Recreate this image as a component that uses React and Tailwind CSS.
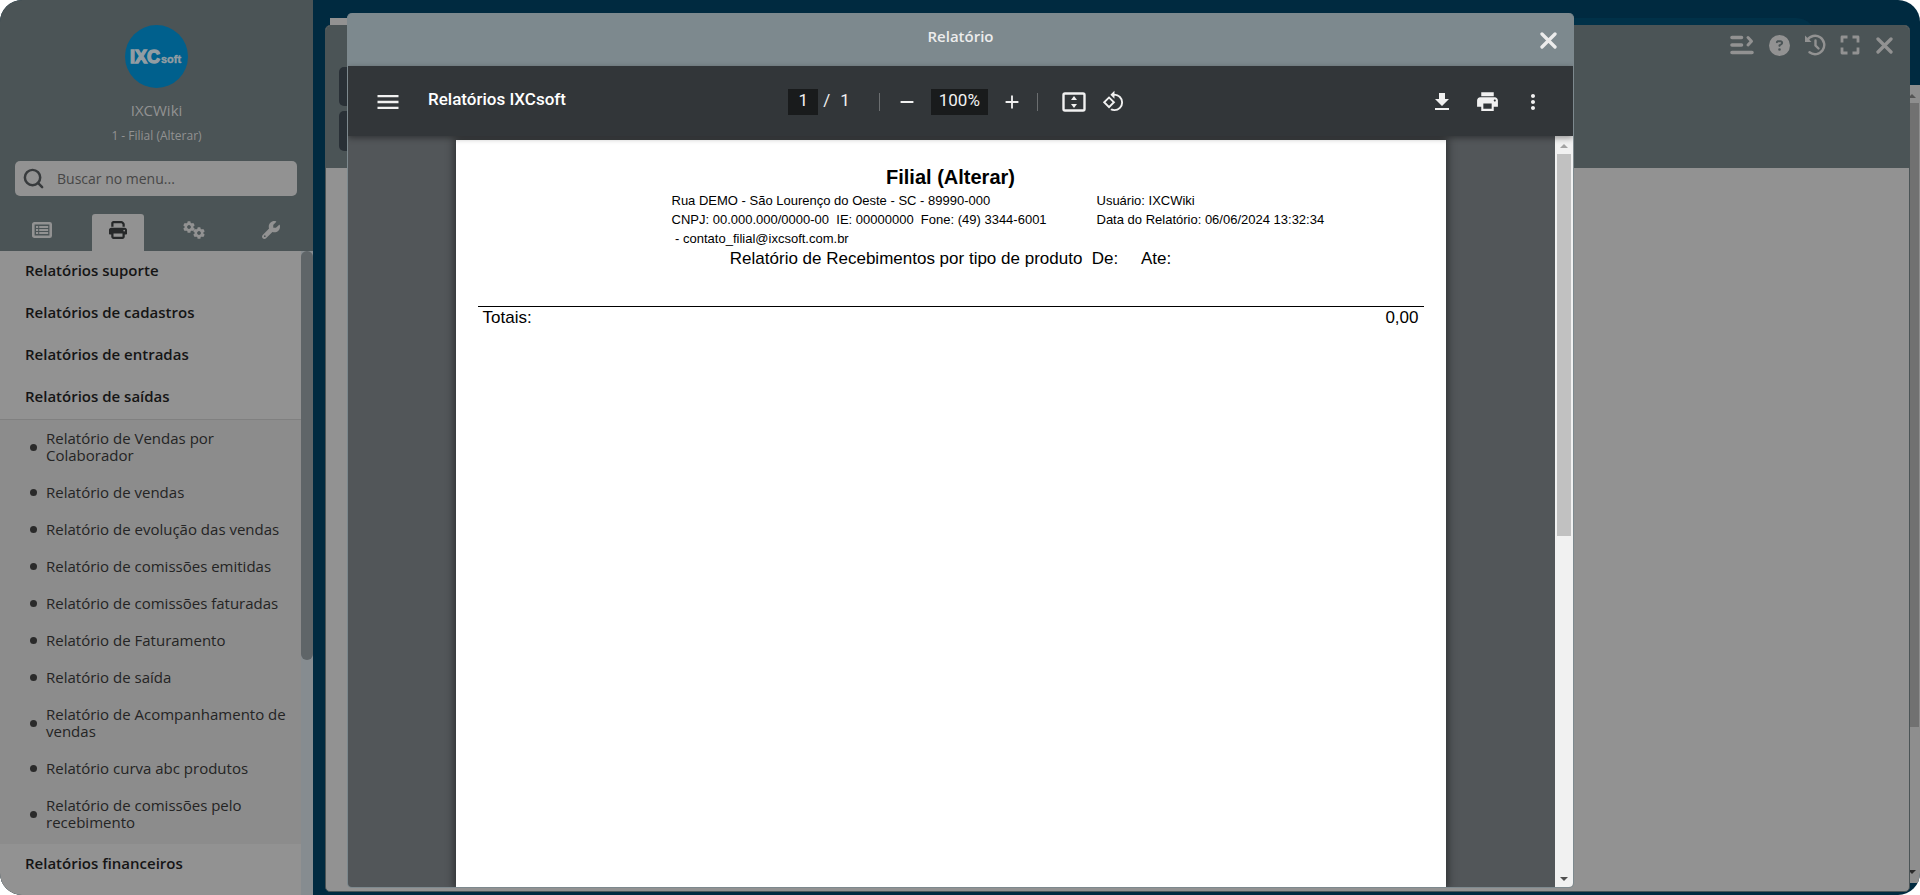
import React from 'react';
import { FaPrint, FaWrench, FaCircleQuestion } from 'react-icons/fa6';
import {
    MdMenu,
    MdAdd,
    MdRemove,
    MdFileDownload,
    MdPrint,
    MdMoreVert,
    MdRotate90DegreesCcw,
} from 'react-icons/md';
import { Search } from 'lucide-react';

const sections = [
    { label: 'Relatórios suporte' },
    { label: 'Relatórios de cadastros' },
    { label: 'Relatórios de entradas' },
    {
        label: 'Relatórios de saídas',
        items: [
            'Relatório de Vendas por Colaborador',
            'Relatório de vendas',
            'Relatório de evolução das vendas',
            'Relatório de comissões emitidas',
            'Relatório de comissões faturadas',
            'Relatório de Faturamento',
            'Relatório de saída',
            'Relatório de Acompanhamento de vendas',
            'Relatório curva abc produtos',
            'Relatório de comissões pelo recebimento',
        ],
    },
    { label: 'Relatórios financeiros' },
];

function ListIcon() {
    return (
        <svg width="20" height="16" viewBox="0 0 20 16" fill="none" stroke="currentColor">
            <rect x="1.3" y="1.3" width="17.4" height="13.4" rx="1" strokeWidth="2.6" />
            <path d="M4 5h2.200M4 8h2.200M4 11h2.200M7.200 5h9M7.200 8h9M7.200 11h9" strokeWidth="1.800" />
        </svg>
    );
}

function Gear({ cx, cy }) {
    return (
        <g transform={`translate(${cx} ${cy})`}>
            <circle r="3.2" fill="none" stroke="currentColor" strokeWidth="2.6" />
            {[0, 60, 120, 180, 240, 300].map(angle => (
                <rect key={angle} x="-1.5" y="-5.8" width="3" height="2.5" rx="0.5" fill="currentColor" transform={`rotate(${angle})`} />
            ))}
        </g>
    );
}

function GearsIcon() {
    return (
        <svg width="22" height="18" viewBox="0 0 22 18">
            <Gear cx={6} cy={6} />
            <Gear cx={16} cy={12} />
        </svg>
    );
}

function CloseIcon() {
    return (
        <svg width="17" height="17" viewBox="0 0 17 17" fill="none" stroke="currentColor" strokeWidth="3.3" strokeLinecap="round">
            <path d="M2 2l13 13M15 2l-13 13" />
        </svg>
    );
}

function ShortcutsIcon() {
    return (
        <svg width="24" height="20" viewBox="0 0 24 20" fill="none" stroke="currentColor" strokeWidth="3.6" strokeLinecap="round" strokeLinejoin="round">
            <path d="M2 2.500h9.500M2 10h9.500M2 17.500h20" />
            <path d="M18 2.500l3.500 3.700L18 10" strokeWidth="3" />
        </svg>
    );
}

function HistoryIcon() {
    return (
        <svg width="22" height="22" viewBox="0 0 22 22" fill="none" stroke="currentColor" strokeWidth="2.4" strokeLinecap="round">
            <path d="M3.200 6.200A9.200 9.200 0 1 1 5.500 18.300" />
            <path d="M11.500 6.500v5l3 3" />
            <path d="M1 1.500v6.500h6.500z" fill="currentColor" stroke="none" />
        </svg>
    );
}

function FullscreenIcon() {
    return (
        <svg width="20" height="20" viewBox="0 0 20 20" fill="none" stroke="currentColor" strokeWidth="2.8" strokeLinejoin="round">
            <path d="M2 7.500V2h5.500M12.500 2h5.500v5.500M18 12.500v5.500h-5.500M7.500 18H2v-5.500" />
        </svg>
    );
}

function FitPageIcon() {
    return (
        <svg width="24" height="20" viewBox="0 0 24 20" fill="none">
            <rect x="1.5" y="1.5" width="21" height="17" rx="1.5" stroke="currentColor" strokeWidth="2.4" />
            <path d="M12 4l3 4H9zM12 16l3-4H9z" fill="currentColor" />
        </svg>
    );
}

function Logo() {
    return (
        <svg width="63" height="63" viewBox="0 0 63 63" role="img" aria-label="IXCsoft">
            <circle cx="31.5" cy="31.5" r="31.5" fill="#00608d" />
            <g fill="#929da3" stroke="#929da3" fontFamily="Liberation Sans, sans-serif" fontWeight="700">
                <text x="5" y="38" strokeWidth="1.4" fontSize="18">IXC</text>
                <text x="36" y="38" strokeWidth="0.4" fontSize="11">soft</text>
            </g>
        </svg>
    );
}

function Arrow({ down, className }) {
    return (
        <svg className={className} width="8" height="4" viewBox="0 0 8 4" fill="currentColor">
            <path d={down ? 'M0 0h8L4 4z' : 'M0 4h8L4 0z'} />
        </svg>
    );
}

function Sidebar() {
    return (
        <aside className="flex w-[313px] shrink-0 flex-col bg-[#4b5456]">
            <div className="flex flex-col items-center pt-[25px] text-[#929292]">
                <Logo />
                <p className="mt-[11px] text-[15px] leading-[22px]">IXCWiki</p>
                <p className="mt-1 text-[12px] leading-[22px]">1 - Filial (Alterar)</p>
            </div>

            <div className="ml-[15px] mr-4 mt-[14px] flex h-[35px] shrink-0 items-center rounded-[5px] bg-[#929292] pl-[7px] text-[#383b3d]">
                <Search className="shrink-0" size={23} strokeWidth={2.6} />
                <input
                    type="text"
                    aria-label="Buscar no menu"
                    placeholder="Buscar no menu..."
                    className="ml-3 h-full min-w-0 flex-1 bg-transparent text-[14px] outline-none placeholder:text-[#464646]"
                />
            </div>

            <nav className="mt-[18px] flex h-[37px] shrink-0 text-[#929292]">
                <button className="mr-2 flex w-[84px] items-center justify-center pb-1.5" aria-label="Menu">
                    <ListIcon />
                </button>
                <button className="flex w-[52px] items-center justify-center rounded-t-[3px] bg-[#929292] pb-1.5 text-[#262829]" aria-label="Relatórios">
                    <FaPrint size={18} />
                </button>
                <button className="ml-3 flex w-[76px] items-center justify-center pb-1.5" aria-label="Configurações">
                    <GearsIcon />
                </button>
                <button className="flex w-[78px] items-center justify-center pb-1.5" aria-label="Ferramentas">
                    <FaWrench size={18} />
                </button>
            </nav>

            <div className="flex min-h-0 flex-1 bg-[#929292]">
                <div className="flex-1 overflow-hidden">
                    {sections.map(section => (
                        <div key={section.label}>
                            <button className="flex h-[42px] w-full items-center pb-[3px] pl-[25px] text-[15px] font-semibold text-[#151515]">
                                {section.label}
                            </button>
                            {section.items && (
                                <ul className="border-t border-[#808080] bg-[#8c8c8c] pb-[3px]">
                                    {section.items.map(item => (
                                        <li key={item}>
                                            <a href="#" className="flex items-center py-[10px] pl-[30px] pr-2 text-[15px] leading-[17px] text-[#242424]">
                                                <span className="mr-[9px] h-[7px] w-[7px] shrink-0 rounded-full bg-[#2a2a2a]" />
                                                {item}
                                            </a>
                                        </li>
                                    ))}
                                </ul>
                            )}
                        </div>
                    ))}
                </div>
                <div className="w-3 bg-[#868c90]">
                    <div className="h-[409px] rounded-full bg-[#5f6568]" />
                </div>
            </div>
        </aside>
    );
}

function Desktop() {
    return (
        <main className="relative flex min-w-0 flex-1 flex-col">
            <div className="flex h-[85px] shrink-0 pl-[17px] pr-[104px] pt-[18px]">
                <div className="w-[120px] bg-[#929292]" />
                <div className="flex-1 rounded-tr-[20px] bg-[#003148]" />
            </div>
            <div className="mb-3 flex flex-1 justify-end">
                <div className="flex w-[17px] flex-col items-center bg-[#8e8e8e] py-[7px]">
                    <Arrow className="my-[2px] shrink-0 text-[#555555]" />
                    <div className="mt-[3px] h-[624px] w-[15px] bg-[#717171]" />
                    <Arrow down className="mb-[2px] mt-auto shrink-0 text-[#2c2c2c]" />
                </div>
            </div>

            <section className="absolute bottom-[3px] left-3 right-[10px] top-[25px] flex flex-col overflow-hidden rounded-[5px] border border-[#4b5456] bg-[#929292]">
                <div className="flex h-[142px] shrink-0 justify-between bg-[#4b5456] pl-[13px] pr-4">
                    <div className="flex flex-col gap-[5px] pt-[41px]">
                        <div className="h-[39px] w-[120px] rounded-[5px] bg-[#293036]" />
                        <div className="h-10 w-[120px] rounded-[5px] bg-[#293036]" />
                    </div>
                    <div className="flex h-[38px] items-center text-[#929292]">
                        <button className="mr-[15px]" aria-label="Atalhos"><ShortcutsIcon /></button>
                        <button className="mr-[14px]" aria-label="Ajuda"><FaCircleQuestion size={21} /></button>
                        <button className="mr-[14px]" aria-label="Histórico"><HistoryIcon /></button>
                        <button className="mr-4" aria-label="Tela cheia"><FullscreenIcon /></button>
                        <button aria-label="Fechar janela"><CloseIcon /></button>
                    </div>
                </div>
            </section>
        </main>
    );
}

function PdfToolbar() {
    return (
        <div className="z-10 grid h-[70px] shrink-0 grid-cols-[1fr_auto_1fr] items-center bg-[#323639] pt-px text-[#f1f1f1] shadow-[0_2px_6px_rgba(0,0,0,0.4)]">
            <div className="flex items-center pl-[26px]">
                <button aria-label="Menu do documento"><MdMenu size={28} /></button>
                <h2 className="ml-[26px] pb-1 font-[Roboto] text-[17px] font-medium text-white">Relatórios IXCsoft</h2>
            </div>

            <div className="flex items-center pr-2 font-[Roboto] text-[17px]">
                <input
                    type="text"
                    aria-label="Página"
                    defaultValue="1"
                    className="h-[26px] w-[30px] bg-[#191b1c] pb-1 text-center outline-none"
                />
                <span className="ml-[5px] flex gap-[10px] pb-0.5">
                    <span>/</span>
                    <span>1</span>
                </span>
                <span className="ml-[29px] h-[18px] w-px bg-[#6b6e70]" />
                <button className="ml-4" aria-label="Diminuir zoom"><MdRemove size={22} /></button>
                <input
                    type="text"
                    aria-label="Zoom"
                    defaultValue="100%"
                    className="ml-[13px] h-[26px] w-[57px] bg-[#191b1c] pb-1 text-center outline-none"
                />
                <button className="ml-[13px]" aria-label="Aumentar zoom"><MdAdd size={22} /></button>
                <span className="ml-[14px] h-[18px] w-px bg-[#6b6e70]" />
                <button className="ml-6" aria-label="Ajustar à página"><FitPageIcon /></button>
                <button className="ml-4" aria-label="Girar"><MdRotate90DegreesCcw size={23} /></button>
            </div>

            <div className="flex items-center justify-end gap-[21px] pr-7">
                <button aria-label="Baixar"><MdFileDownload size={24} /></button>
                <button aria-label="Imprimir"><MdPrint size={25} /></button>
                <button aria-label="Mais ações"><MdMoreVert size={24} /></button>
            </div>
        </div>
    );
}

function ReportPage() {
    return (
        <article className="mt-1 max-w-[990px] flex-1 bg-white px-[22px] pt-[26px] font-['Liberation_Sans',sans-serif] text-black shadow-[0_0_8px_2px_rgba(0,0,0,0.45)]">
            <h1 className="text-center text-[20px] font-bold leading-[22px]">Filial (Alterar)</h1>
            <div className="flex pl-[194px] pt-[3px] text-[13px] leading-[19px]">
                <div className="w-[425px] whitespace-pre">
                    <p>Rua DEMO - São Lourenço do Oeste - SC - 89990-000</p>
                    <p>CNPJ: 00.000.000/0000-00  IE: 00000000  Fone: (49) 3344-6001</p>
                    <p> - contato_filial@ixcsoft.com.br</p>
                </div>
                <div>
                    <p>Usuário: IXCWiki</p>
                    <p>Data do Relatório: 06/06/2024 13:32:34</p>
                </div>
            </div>
            <p className="whitespace-pre text-center text-[17px] leading-[22px]">Relatório de Recebimentos por tipo de produto  De:     Ate:</p>
            <table className="mt-9 w-full border-t border-black text-[17px] leading-[22px]">
                <tbody>
                    <tr>
                        <td className="pl-[5px] text-left">Totais:</td>
                        <td className="pr-[5px] text-right">0,00</td>
                    </tr>
                </tbody>
            </table>
        </article>
    );
}

function ReportModal() {
    return (
        <div className="absolute inset-0 flex px-[346px] pb-[7px] pl-[347px] pt-[13px]">
            <div role="dialog" aria-label="Relatório" className="flex min-w-0 flex-1 flex-col overflow-hidden rounded-[5px] border border-t-0 border-[#7d898e] bg-[#7d898e]">
                <header className="relative flex h-[53px] shrink-0 justify-center text-[#ececec]">
                    <h2 className="pt-3 text-[15px] font-semibold leading-[22px]">Relatório</h2>
                    <button className="absolute right-4 top-[19px]" aria-label="Fechar"><CloseIcon /></button>
                </header>
                <PdfToolbar />
                <div className="flex min-h-0 flex-1 bg-[#525659]">
                    <div className="flex flex-1 justify-center overflow-hidden pr-0.5">
                        <ReportPage />
                    </div>
                    <div className="flex w-[18px] flex-col items-center bg-[#f1f1f1] py-[6px]">
                        <Arrow className="my-[2px] shrink-0 text-[#a3a3a3]" />
                        <div className="mt-1 h-[382px] w-[14px] bg-[#c1c1c1]" />
                        <Arrow down className="mt-auto shrink-0 text-[#505050]" />
                    </div>
                </div>
            </div>
        </div>
    );
}

export default function App() {
    return (
        <div className="relative flex h-screen overflow-hidden rounded-[22px] bg-[#002a40] font-['Open_Sans',sans-serif]">
            <Sidebar />
            <Desktop />
            <ReportModal />
        </div>
    );
}
